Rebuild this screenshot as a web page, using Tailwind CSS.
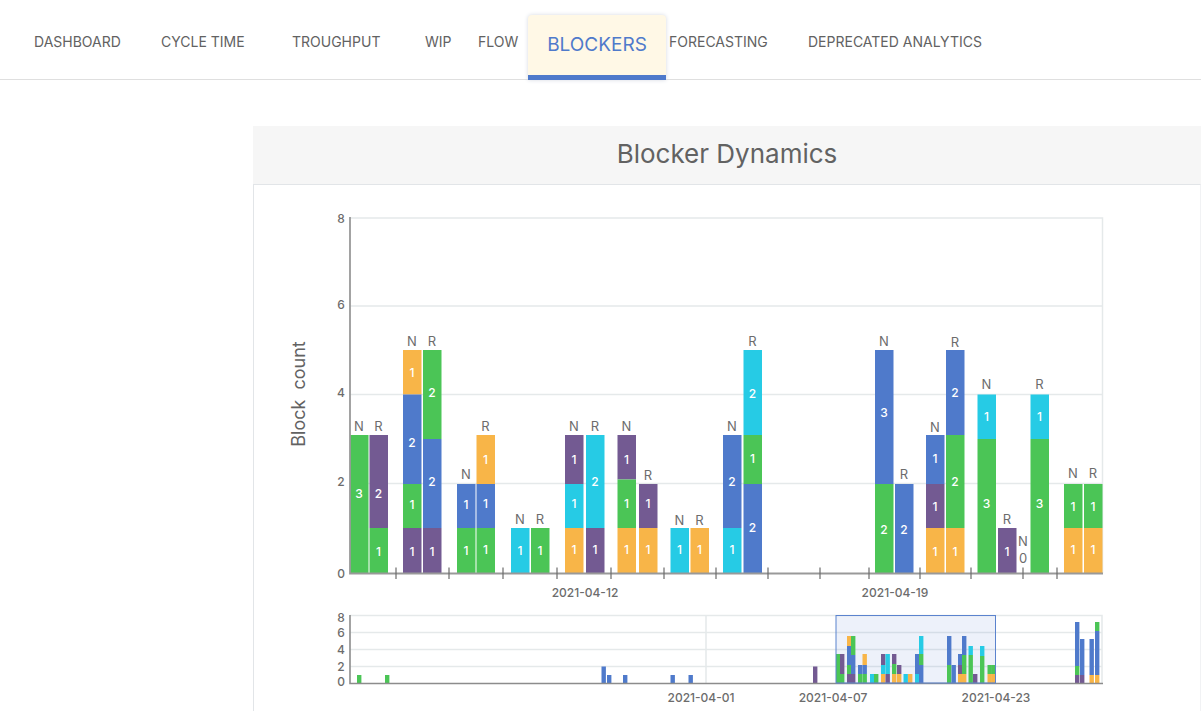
<!DOCTYPE html>
<html lang="en">
<head>
<meta charset="utf-8">
<meta name="viewport" content="width=device-width, initial-scale=1">
<title>Blocker Dynamics</title>
<script src="https://cdn.jsdelivr.net/npm/@tailwindcss/browser@4"></script>
</head>
<body class="bg-white font-['Inter','Liberation_Sans',sans-serif] text-[#626262]">
<nav class="h-20 border-b border-[#dfdfdf] pl-[34px]">
  <div class="grid h-20 grid-cols-[127px_131px_133px_53px_50px_138px_142px_auto] items-center whitespace-nowrap text-sm">
    <a href="#" class="pt-1">DASHBOARD</a>
    <a href="#" class="pt-1">CYCLE TIME</a>
    <a href="#" class="pt-1">TROUGHPUT</a>
    <a href="#" class="pt-1">WIP</a>
    <a href="#" class="pt-1">FLOW</a>
    <a href="#" aria-current="page" class="flex h-[65px] items-center justify-center self-end rounded-t-sm border-b-[5px] border-[#4f7acb] bg-[#fff8e6] text-[19px] text-[#4f7acb] shadow-[0_0_4px_#d5d9e2]">BLOCKERS</a>
    <a href="#" class="pt-1 pl-[3px]">FORECASTING</a>
    <a href="#" class="pt-1">DEPRECATED ANALYTICS</a>
  </div>
</nav>
<main class="pt-[46px] pl-[253px]">
  <section>
    <h1 class="flex h-[58px] items-center justify-center bg-[#f6f6f6] pb-0.5 text-[26px] leading-8">Blocker Dynamics</h1>
    <div class="border-x border-t border-[#e2e5e8] border-r-[#f1f2f4]">
      <svg id="chart" viewBox="254 185 946 526" class="block w-full" role="img" aria-label="Blocker Dynamics chart">
        <g id="grid" class="fill-none stroke-[#e5e9ea]" stroke-width="1.5">
          <path d="M350 218H1102.500V573M350 306H1102M350 394.500H1102M350 483.500H1102"/>
          <path d="M350 615.500H1102V683M350 632.500H1102M350 649.500H1102M350 666.500H1102M706 616V683"/>
        </g>
        <rect x="836" y="615.5" width="159.500" height="67.500" class="fill-[#4f7acb]/10"/>
        <g id="bars"></g>
        <path d="M350 217V573.500H1103" class="fill-none stroke-[#999999]" stroke-width="1.8"/>
        <path d="M350 615V683.500H1103" class="fill-none stroke-[#8c8c8c]" stroke-width="1.6"/>
        <path id="ticks" class="fill-none stroke-[#6c6c6c]" stroke-width="1.2"/>
        <rect x="836" y="615.500" width="159.500" height="67.500" class="fill-none stroke-[#5b83ce]"/>
        <g id="values" class="fill-white text-[12px] font-medium" text-anchor="middle"></g>
        <g id="heads" class="fill-[#6c6c6c] text-[13px]" text-anchor="middle"></g>
        <g id="labels" class="fill-[#6c6c6c] text-[12px] font-medium" text-anchor="middle"></g>
        <text transform="translate(305 394) rotate(-90)" text-anchor="middle" class="fill-[#626262] text-[18px]">Block&#160; count</text>
      </svg>
    </div>
  </section>
</main>
<script>
const color = {G: '#4bc556', P: '#735a92', B: '#4f7acb', C: '#26cbe5', O: '#f8b548'};
const el = id => document.getElementById(id);
function add(parent, name, attrs, text) {
  const n = document.createElementNS('http://www.w3.org/2000/svg', name);
  for (const k in attrs) n.setAttribute(k, attrs[k]);
  if (text !== undefined) n.textContent = text;
  el(parent).appendChild(n);
}
function stack(x, width, base, parts) {
  parts.forEach((p, i) => {
    const end = i + 1 < parts.length ? parts[i + 1][1] : base;
    add('bars', 'rect', {x, y: p[1], width, height: end - p[1], fill: color[p[0]]});
  });
}
// Each column: x, heading, heading centre, then [colour, top, value, value centre]
const columns = [
  [350, 'N', 426, ['G', 435, 3, 494]],
  [369.5, 'R', 426, ['P', 435, 2, 494], ['G', 528, 1, 552]],
  [403, 'N', 341, ['O', 350, 1, 373], ['B', 394.5, 2, 443], ['G', 484, 1, 505], ['P', 528, 1, 552]],
  [423, 'R', 341, ['G', 350, 2, 393], ['B', 439, 2, 482], ['P', 528, 1, 552]],
  [457, 'N', 474, ['B', 484, 1, 505], ['G', 528, 1, 551]],
  [476.5, 'R', 426, ['O', 435, 1, 460], ['B', 484, 1, 504], ['G', 528, 1, 550]],
  [511, 'N', 519, ['C', 528, 1, 551]],
  [531, 'R', 519, ['G', 528, 1, 551]],
  [565, 'N', 426, ['P', 435, 1, 460], ['C', 484, 1, 504], ['O', 528, 1, 550]],
  [586, 'R', 426, ['C', 435, 2, 482], ['P', 528, 1, 550]],
  [617.5, 'N', 426, ['P', 435, 1, 460], ['G', 479.5, 1, 504], ['O', 528, 1, 550]],
  [639, 'R', 475, ['P', 484, 1, 504], ['O', 528, 1, 550]],
  [670.5, 'N', 520, ['C', 528, 1, 550]],
  [690.5, 'R', 520, ['O', 528, 1, 550]],
  [723, 'N', 426, ['B', 435, 2, 482], ['C', 528, 1, 550]],
  [743.5, 'R', 341, ['C', 350, 2, 394], ['G', 435, 1, 459], ['B', 484, 2, 528]],
  [875, 'N', 341, ['B', 350, 3, 413], ['G', 484, 2, 530]],
  [895, 'R', 474, ['B', 484, 2, 530]],
  [926, 'N', 427, ['B', 435, 1, 459], ['P', 484, 1, 507], ['O', 528, 1, 552]],
  [946, 'R', 342, ['B', 350, 2, 393], ['G', 435, 2, 482], ['O', 528, 1, 552]],
  [977.5, 'N', 384, ['C', 394.5, 1, 417], ['G', 439, 3, 504]],
  [998, 'R', 519, ['P', 528, 1, 552]],
  [1030.5, 'R', 384, ['C', 394.5, 1, 417], ['G', 439, 3, 504]],
  [1064, 'N', 473, ['G', 484, 1, 507], ['O', 528, 1, 550]],
  [1084, 'R', 473, ['G', 484, 1, 507], ['O', 528, 1, 550]]
];
for (const [x, head, hy, ...parts] of columns) {
  stack(x, 18.5, 573, parts);
  add('heads', 'text', {x: x + 9, y: hy + 5}, head);
  for (const p of parts) add('values', 'text', {x: x + 9, y: p[3] + 4}, p[2]);
}
add('heads', 'text', {x: 1023, y: 546}, 'N');
add('heads', 'text', {x: 1023, y: 563}, '0');
// Overview strip: x, then [colour, top]
const mini = [
  [357, ['G', 675]], [385, ['G', 675]], [601.5, ['B', 666.5]], [607, ['B', 675]], [623, ['B', 675]],
  [670.5, ['B', 675]], [688.5, ['B', 675]], [813, ['P', 666.5]],
  [836, ['G', 654]], [840, ['P', 654], ['G', 674]],
  [847, ['O', 636], ['B', 646], ['G', 665], ['P', 674]], [851, ['G', 636], ['B', 655], ['P', 674]],
  [858, ['B', 665], ['G', 674]], [862.5, ['O', 654], ['B', 665], ['G', 674]],
  [870, ['C', 674]], [874, ['G', 674]],
  [881, ['P', 654], ['C', 665], ['O', 674]], [885.5, ['C', 654], ['P', 674]],
  [892, ['P', 654], ['G', 664], ['O', 674]], [897, ['P', 665], ['O', 674]],
  [903.5, ['C', 674]], [908, ['O', 674]],
  [915, ['B', 654], ['C', 674]], [919, ['C', 636], ['G', 654], ['B', 665]],
  [947, ['B', 636], ['G', 665]], [951.5, ['B', 665]],
  [958, ['B', 654], ['P', 665], ['O', 674]], [962, ['B', 636], ['G', 655], ['O', 674]],
  [968.5, ['C', 646], ['G', 655]], [973, ['P', 674]], [980, ['C', 646], ['G', 656]],
  [987.5, ['G', 665], ['O', 674]], [991.5, ['G', 665], ['O', 674]],
  [1075, ['B', 622], ['G', 666], ['P', 675]], [1080, ['B', 639], ['P', 675]],
  [1089.5, ['B', 639], ['O', 675]], [1095, ['G', 622], ['B', 631], ['O', 675]]
];
for (const [x, ...parts] of mini) stack(x, 4.4, 683, parts);
el('ticks').setAttribute('d', [396, 449, 503, 557, 611, 664, 716, 768, 820, 869, 920, 971, 1023, 1057].map(x => `M${x} 567.5V579`).join(''));
for (const [y, t] of [[219, 8], [305, 6], [393, 4], [482, 2], [574, 0], [618, 8], [633, 6], [650, 4], [667, 2], [682, 0]])
  add('labels', 'text', {x: 341, y: y + 4}, t);
for (const [x, y, t] of [[585, 593, '2021-04-12'], [895, 593, '2021-04-19'], [701, 698, '2021-04-01'], [833, 698, '2021-04-07'], [996, 698, '2021-04-23']])
  add('labels', 'text', {x, y: y + 4}, t);
</script>
</body>
</html>
